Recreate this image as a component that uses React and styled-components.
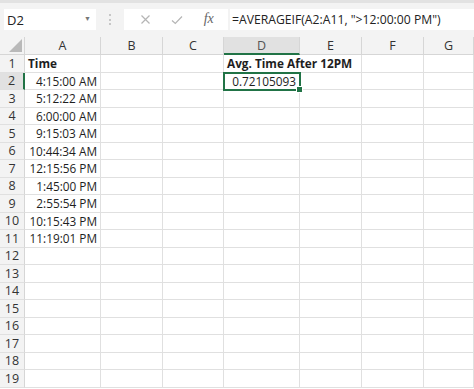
import React from 'react'
import styled, { createGlobalStyle } from 'styled-components'

const Global = createGlobalStyle`
  html, body {
    margin: 0;
    padding: 0;
    background: #f3f3f3;
    overflow: hidden;
  }
  body {
    font-family: "Open Sans", "Noto Sans", sans-serif;
    color: #222;
  }
`

const Page = styled.div`
  width: 474px;
  height: 389px;
  display: flex;
  flex-direction: column;
  border-top: 3px solid #e2e2e2;
  box-sizing: border-box;
`

const FormulaBar = styled.div`
  display: flex;
  align-items: center;
  height: 21px;
  padding: 6px 0 7px 4px;
`

const NameBox = styled.div`
  width: 92px;
  height: 21px;
  background: #fff;
  display: flex;
  align-items: center;
  justify-content: space-between;
  box-sizing: border-box;
  padding: 0 5px 0 3px;
  font-size: 13px;
  color: #222;
`

const Caret = styled.span`
  font-size: 7px;
  color: #777;
  margin-top: -2px;
`

const Dots = styled.div`
  width: 28px;
  display: flex;
  flex-direction: column;
  align-items: center;
  gap: 2.5px;
  span {
    width: 2px;
    height: 2px;
    border-radius: 1px;
    background: #b8b8b8;
  }
`

const Buttons = styled.div`
  width: 104px;
  height: 21px;
  background: #fff;
  display: flex;
  align-items: center;
  justify-content: space-around;
  padding: 0 4px 0 6px;
  box-sizing: border-box;
`

const Fx = styled.span`
  font-family: "Liberation Serif", "DejaVu Serif", serif;
  font-style: italic;
  font-size: 14px;
  color: #666;
  margin-top: -2px;
`

const Input = styled.div`
  flex: 1;
  height: 21px;
  margin-left: 2px;
  background: #fff;
  display: flex;
  align-items: center;
  padding-left: 2px;
  font-size: 12.2px;
  color: #222;
  white-space: nowrap;
  overflow: hidden;
`

const Sheet = styled.div`
  flex: 1;
  position: relative;
  display: grid;
  grid-template-columns: 25px 76px 62px 61px 76px 62px 62px 1fr;
  grid-template-rows: 18px;
  grid-auto-rows: 17.5px;
  background: #fff;
  overflow: hidden;
`

const Corner = styled.div`
  background: #f3f3f3;
  border-right: 1px solid #d6d6d6;
  border-bottom: 1px solid #d6d6d6;
  position: relative;
  &::after {
    content: "";
    position: absolute;
    right: 2px;
    bottom: 2px;
    border-style: solid;
    border-width: 0 0 13px 13px;
    border-color: transparent transparent #b9b9b9 transparent;
  }
`

const ColHead = styled.div`
  background: ${p => (p.active ? '#e1e1e1' : '#f3f3f3')};
  border-right: 1px solid #d6d6d6;
  border-bottom: ${p => (p.active ? '2px solid #217346' : '1px solid #d6d6d6')};
  display: flex;
  align-items: center;
  justify-content: center;
  font-size: 12.5px;
  color: ${p => (p.active ? '#555' : '#333')};
  box-sizing: border-box;
`

const RowHead = styled.div`
  background: ${p => (p.active ? '#e1e1e1' : '#f3f3f3')};
  border-right: ${p => (p.active ? '2px solid #217346' : '1px solid #d6d6d6')};
  border-bottom: 1px solid #e0e0e0;
  display: flex;
  align-items: center;
  justify-content: center;
  font-size: 12.5px;
  color: #333;
  box-sizing: border-box;
`

const Cell = styled.div`
  border-right: ${p => (p.overflow ? 'none' : '1px solid #e0e0e0')};
  border-bottom: 1px solid #e0e0e0;
  display: flex;
  align-items: center;
  justify-content: ${p => (p.right ? 'flex-end' : 'flex-start')};
  padding: 0 3px;
  font-size: 11.8px;
  font-weight: ${p => (p.bold ? 700 : 400)};
  color: #1e1e1e;
  white-space: nowrap;
  overflow: visible;
  min-width: 0;
  box-sizing: border-box;
`

const Selection = styled.div`
  position: absolute;
  left: 223px;
  top: 35px;
  width: 78px;
  height: 19px;
  border: 2px solid #217346;
  box-sizing: border-box;
  pointer-events: none;
  &::after {
    content: "";
    position: absolute;
    right: -4px;
    bottom: -4px;
    width: 5px;
    height: 5px;
    background: #217346;
    border: 1px solid #fff;
  }
`

const cols = ['A', 'B', 'C', 'D', 'E', 'F', 'G']

const times = [
  '4:15:00 AM',
  '5:12:22 AM',
  '6:00:00 AM',
  '9:15:03 AM',
  '10:44:34 AM',
  '12:15:56 PM',
  '1:45:00 PM',
  '2:55:54 PM',
  '10:15:43 PM',
  '11:19:01 PM',
]

function cellFor(row, col) {
  if (row === 1 && col === 'A') return { text: 'Time', bold: true }
  if (row === 1 && col === 'D') return { text: 'Avg. Time After 12PM', bold: true, overflow: true }
  if (row >= 2 && row <= 11 && col === 'A') return { text: times[row - 2], right: true }
  if (row === 2 && col === 'D') return { text: '0.72105093', right: true }
  return { text: '' }
}

const XIcon = () => (
  <svg width="11" height="11" viewBox="0 0 11 11">
    <path d="M1.5 1.5 L9.5 9.5 M9.5 1.5 L1.5 9.5" stroke="#b5b5b5" strokeWidth="1.2" fill="none" />
  </svg>
)

const CheckIcon = () => (
  <svg width="12" height="10" viewBox="0 0 12 10">
    <path d="M1 5.5 L4.3 8.5 L11 1.5" stroke="#b5b5b5" strokeWidth="1.2" fill="none" />
  </svg>
)

export default function App() {
  const rows = Array.from({ length: 19 }, (_, i) => i + 1)
  return (
    <Page>
      <Global />
      <FormulaBar>
        <NameBox>
          D2
          <Caret>▼</Caret>
        </NameBox>
        <Dots>
          <span />
          <span />
          <span />
        </Dots>
        <Buttons>
          <XIcon />
          <CheckIcon />
          <Fx>fx</Fx>
        </Buttons>
        <Input>=AVERAGEIF(A2:A11, "&gt;12:00:00 PM")</Input>
      </FormulaBar>
      <Sheet>
        <Corner />
        {cols.map(c => (
          <ColHead key={c} active={c === 'D'}>
            {c}
          </ColHead>
        ))}
        {rows.map(r => (
          <React.Fragment key={r}>
            <RowHead active={r === 2}>{r}</RowHead>
            {cols.map(c => {
              const cell = cellFor(r, c)
              return (
                <Cell key={c} bold={cell.bold} right={cell.right} overflow={cell.overflow}>
                  {cell.text}
                </Cell>
              )
            })}
          </React.Fragment>
        ))}
        <Selection />
      </Sheet>
    </Page>
  )
}
